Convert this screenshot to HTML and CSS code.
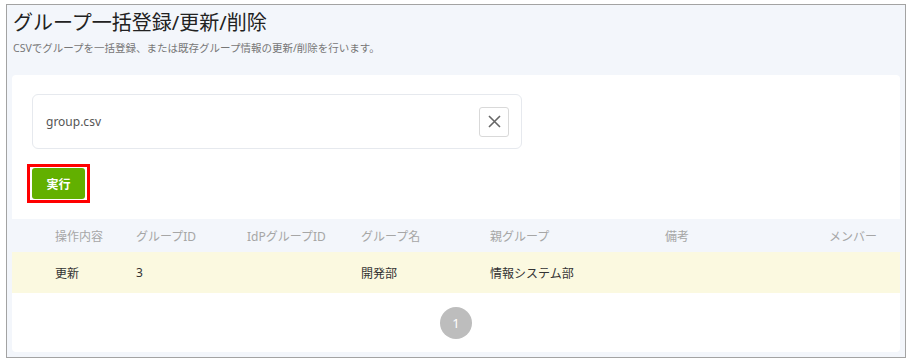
FILE: index.html
```html
<!DOCTYPE html>
<html lang="ja">
<head>
    <meta charset="UTF-8">
    <title>グループ一括登録/更新/削除</title>
    <link rel="stylesheet" href="styles.css">
</head>
<body>
    <div class="frame">
        <div class="page-head">
            <h1>グループ一括登録/更新/削除</h1>
            <p class="lead">CSVでグループを一括登録、または既存グループ情報の更新/削除を行います。</p>
        </div>

        <div class="card">
            <div class="upload">
                <span class="file-name">group.csv</span>
                <button class="clear-btn" type="button" aria-label="クリア">
                    <svg width="13" height="13" viewBox="0 0 13 13">
                        <path d="M1 1 L12 12 M12 1 L1 12" stroke="#666" stroke-width="1.6" fill="none"/>
                    </svg>
                </button>
            </div>

            <!-- 赤枠は注釈 -->
            <div class="highlight">
                <button class="run-btn" type="button">実行</button>
            </div>

            <div class="result-table">
                <div class="row head">
                    <span>操作内容</span>
                    <span>グループID</span>
                    <span>IdPグループID</span>
                    <span>グループ名</span>
                    <span>親グループ</span>
                    <span>備考</span>
                    <span class="right">メンバー</span>
                </div>
                <div class="row body">
                    <span>更新</span>
                    <span>3</span>
                    <span></span>
                    <span>開発部</span>
                    <span>情報システム部</span>
                    <span></span>
                    <span></span>
                </div>
            </div>

            <div class="pager">
                <span class="page current">1</span>
            </div>
        </div>
    </div>
</body>
</html>
```

FILE: styles.css
```css
body {
    margin: 0;
    background: #fff;
    font-family: "Noto Sans", "Noto Sans CJK JP", sans-serif;
    color: #333;
}

.frame {
    margin: 4px 4px 0 6px;
    height: 354px;
    box-sizing: border-box;
    border: 1px solid #a3a3a3;
    background: #f3f6fb;
    padding: 0 5px 0 5px;
}

.page-head {
    padding: 4px 0 0 1px;
}

.page-head h1 {
    margin: 0;
    font-size: 20px;
    font-weight: 400;
    line-height: 28px;
    color: #222;
}

.lead {
    margin: 3px 0 0;
    font-size: 10.5px;
    line-height: 16px;
    color: #777;
}

.card {
    margin-top: 19px;
    background: #fff;
    border-radius: 4px;
    padding-top: 19px;
    height: 277px;
    box-sizing: border-box;
}

.upload {
    margin-left: 20px;
    width: 490px;
    height: 55px;
    box-sizing: border-box;
    border: 1px solid #e6e9ee;
    border-radius: 6px;
    display: flex;
    align-items: center;
    justify-content: space-between;
    padding: 0 12px 0 13px;
}

.file-name {
    font-size: 12px;
    color: #555;
}

.clear-btn {
    width: 30px;
    height: 30px;
    border: 1px solid #d9d9d9;
    border-radius: 3px;
    background: #fff;
    display: flex;
    align-items: center;
    justify-content: center;
    padding: 0;
}

.highlight {
    width: max-content;
    margin: 15px 0 0 15px;
    border: 3px solid #f00;
    padding: 1px 2px;
}

.run-btn {
    display: block;
    width: 53px;
    height: 31px;
    border: none;
    border-radius: 3px;
    background: #62b000;
    color: #fff;
    font-family: inherit;
    font-size: 12px;
    font-weight: 700;
}

.result-table {
    margin-top: 16px;
}

.row {
    display: grid;
    grid-template-columns: 81px 111px 114px 129px 175px 1fr auto;
    align-items: center;
    padding: 0 23px 0 43px;
    font-size: 12px;
}

.row.head {
    height: 33px;
    background: #f3f6fb;
    color: #a6a6a6;
}

.row.body {
    height: 41px;
    background: #fbf9e0;
    color: #333;
}

.right {
    text-align: right;
}

.pager {
    display: flex;
    justify-content: center;
    padding-top: 14px;
}

.page {
    width: 32px;
    height: 32px;
    border-radius: 50%;
    background: #bdbdbd;
    color: #fff;
    font-size: 13px;
    display: flex;
    align-items: center;
    justify-content: center;
}
```
